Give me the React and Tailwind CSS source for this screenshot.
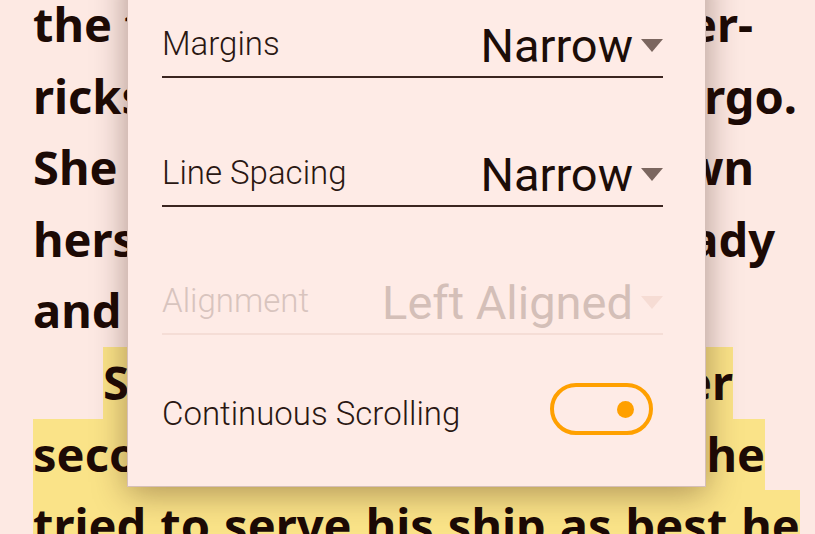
import React from 'react';

const Caret = ({ className }) => (
  <svg width="22" height="13" viewBox="0 0 22 13" className={className}>
    <path d="M0 0 H22 L11 13 Z" fill="currentColor" />
  </svg>
);

function SelectRow({ label, value, disabled }) {
  return (
    <div
      className={`flex items-end justify-between border-b-2 pb-[3px] ${
        disabled ? 'border-[#f5ddd6]' : 'border-[#3b2520]'
      }`}
    >
      <span
        className={`mb-[10px] text-[33px] leading-[38px] font-light ${
          disabled ? 'text-[#d8c4be]' : 'text-[#2a1712]'
        }`}
      >
        {label}
      </span>
      <span className="flex items-center gap-2">
        <span
          className={`text-[47px] leading-[55px] ${
            disabled ? 'text-[#d4bfb8]' : 'text-[#1c0d08]'
          }`}
        >
          {value}
        </span>
        <Caret className={disabled ? 'text-[#f6dcd4]' : 'text-[#7b665f]'} />
      </span>
    </div>
  );
}

function Line({ words, className = '' }) {
  return (
    <div className={`flex justify-between whitespace-nowrap ${className}`}>
      {words.map((w, i) => (
        <span key={i}>{w}</span>
      ))}
    </div>
  );
}

export default function App() {
  return (
    <div className="relative h-[534px] w-[815px] overflow-hidden bg-[#fde9e3]">
      {/* Book page */}
      <div className="-mt-[11px] pl-[33px] font-['Noto_Sans',sans-serif] text-[47px] font-bold leading-[71.6px] text-[#1c0a05]">
        <Line className="w-[720px]" words={['the twin', 'river-']} />
        <Line className="w-[764px]" words={['ricks', 'cargo.']} />
        <Line className="w-[721px]" words={['She was', 'down']} />
        <Line className="w-[742px]" words={['herself', 'ready']} />
        <div className="whitespace-nowrap">and waited.</div>
        <Line className="ml-[70px] w-[630px] bg-[#fae388]" words={['Sometimes', 'after']} />
        <Line className="w-[732px] bg-[#fae388]" words={['second', 'the']} />
        <Line
          className="w-[767px] bg-[#fae388]"
          words={['tried', 'to', 'serve', 'his', 'ship', 'as', 'best', 'he']}
        />
      </div>

      {/* Settings dialog */}
      <div className="absolute left-[127px] top-[-40px] w-[579px] border border-[#d6bfb8] bg-[#feebe6] pt-[57px] pb-[51px] pl-[34px] pr-[42px] font-['Roboto',sans-serif] shadow-[0_6px_32px_rgba(50,15,5,0.38)]">
        <div className="flex flex-col gap-[68.5px]">
          <SelectRow label="Margins" value="Narrow" />
          <SelectRow label="Line Spacing" value="Narrow" />
          <SelectRow label="Alignment" value="Left Aligned" disabled />
        </div>
        <div className="mt-[48px] flex items-end justify-between">
          <span className="mb-[2px] text-[33px] leading-[38px] font-light text-[#2a1712]">
            Continuous Scrolling
          </span>
          <div className="mr-[10px] flex h-[52px] w-[103px] items-center justify-end rounded-full border-4 border-[#ffa000] pr-[15px]">
            <div className="h-[17px] w-[17px] rounded-full bg-[#ffa000]" />
          </div>
        </div>
      </div>
    </div>
  );
}
